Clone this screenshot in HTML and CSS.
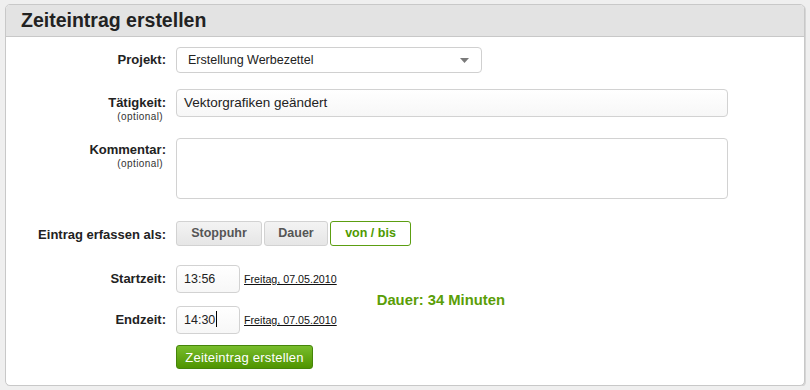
FILE: index.html
```html
<!DOCTYPE html>
<html lang="de">
<head>
<meta charset="utf-8">
<title>Zeiteintrag erstellen</title>
<link rel="stylesheet" href="styles.css">
</head>
<body>
<div class="page">
  <div class="panel">
    <div class="panel-head"><h1 class="title">Zeiteintrag erstellen</h1></div>
    <div class="form">
      <div class="row row-project">
        <div class="label lbl-project">Projekt:</div>
        <div class="select">
          <span>Erstellung Werbezettel</span>
          <svg class="arrow" width="9" height="5" viewBox="0 0 9 5"><path d="M0 0H9L4.5 5Z" fill="#7a7a7a"/></svg>
        </div>
      </div>
      <div class="row row-task">
        <div class="label lbl-task">Tätigkeit:<span class="opt">(optional)</span></div>
        <div class="input wide">Vektorgrafiken geändert</div>
      </div>
      <div class="row row-comment">
        <div class="label lbl-comment">Kommentar:<span class="opt">(optional)</span></div>
        <div class="textarea"></div>
      </div>
      <div class="row row-mode">
        <div class="label lbl-mode">Eintrag erfassen als:</div>
        <div class="seg">
          <span class="seg-btn b-stop">Stoppuhr</span>
          <span class="seg-btn b-dauer">Dauer</span>
          <span class="seg-btn b-active">von / bis</span>
        </div>
      </div>
      <div class="times">
        <div class="time-rows">
          <div class="row row-start">
            <div class="label lbl-time">Startzeit:</div>
            <div class="input time">13:56</div>
            <a class="date" href="#">Freitag, 07.05.2010</a>
          </div>
          <div class="row row-end">
            <div class="label lbl-time">Endzeit:</div>
            <div class="input time">14:30<span class="caret"></span></div>
            <a class="date" href="#">Freitag, 07.05.2010</a>
          </div>
        </div>
        <div class="duration">Dauer: 34 Minuten</div>
      </div>
      <div class="row row-submit">
        <div class="label"></div>
        <button class="submit" type="button">Zeiteintrag erstellen</button>
      </div>
    </div>
  </div>
</div>
</body>
</html>
```

FILE: styles.css
```css
html, body {
  margin: 0;
  padding: 0;
  background: #efefef;
  font-family: "Liberation Sans", Arial, sans-serif;
  color: #222;
}
.page {
  padding: 4px 5px 0 5px;
}
.panel {
  box-sizing: border-box;
  width: 800px;
  height: 382px;
  background: #fff;
  border: 1px solid #c8c8c8;
  border-radius: 5px;
  box-shadow: 1px 1px 0 #d6d6d6;
}
.panel-head {
  height: 31px;
  background: #e3e3e3;
  border-bottom: 1px solid #c8c8c8;
  border-radius: 4px 4px 0 0;
  padding-left: 15px;
}
.title {
  margin: 0;
  font-size: 19.5px;
  line-height: 31px;
  font-weight: bold;
  color: #222;
}
.form {
  padding-top: 10px;
}
.row {
  display: flex;
  align-items: flex-start;
}
.label {
  width: 160px;
  flex: none;
  margin-right: 10px;
  text-align: right;
  font-size: 13px;
  font-weight: bold;
  line-height: 16px;
  color: #222;
}
.opt {
  display: block;
  font-size: 10px;
  font-weight: normal;
  line-height: 12px;
  padding-right: 3px;
  letter-spacing: 0.4px;
  color: #333;
}
.select {
  box-sizing: border-box;
  width: 306px;
  height: 26px;
  border: 1px solid #d0d0d0;
  border-radius: 4px;
  background: #fff;
  display: flex;
  align-items: center;
  justify-content: space-between;
  padding: 0 12px 0 11px;
  font-size: 12.5px;
  color: #222;
}
.arrow { display: block; }
.lbl-project { padding-top: 5px; }
.row-task { margin-top: 16px; }
.lbl-task { padding-top: 6px; }
.input {
  box-sizing: border-box;
  height: 28px;
  border: 1px solid #d2d2d2;
  border-radius: 4px;
  background: linear-gradient(#ffffff, #f7f7f7);
  font-size: 13.5px;
  line-height: 26px;
  padding-left: 7px;
  color: #222;
}
.wide { width: 552px; }
.row-comment { margin-top: 15px; }
.lbl-comment { padding-top: 4px; }
.textarea {
  box-sizing: border-box;
  width: 552px;
  height: 61px;
  border: 1px solid #d2d2d2;
  border-radius: 4px;
  background: #fff;
}
.row-mode { margin-top: 22px; }
.lbl-mode { padding-top: 6px; }
.seg {
  display: flex;
  gap: 2px;
}
.seg-btn {
  box-sizing: border-box;
  height: 25px;
  line-height: 23px;
  border: 1px solid #d2d2d2;
  border-radius: 3px;
  background: linear-gradient(#f3f3f3, #e6e6e6);
  font-size: 12.5px;
  font-weight: bold;
  color: #555;
  text-align: center;
}
.b-stop { width: 86px; }
.b-dauer { width: 64px; }
.b-active {
  width: 81px;
  background: #fff;
  border-color: #5c9e12;
  color: #4f9a00;
}
.times {
  display: flex;
  align-items: center;
  margin-top: 19px;
}
.row-end { margin-top: 13px; }
.lbl-time { padding-top: 6px; }
.time {
  width: 64px;
  font-size: 12.5px;
  padding-left: 7px;
}
.caret {
  display: inline-block;
  width: 1px;
  height: 16px;
  background: #000;
  vertical-align: -3px;
  margin-left: 1px;
}
.date {
  margin-left: 4px;
  margin-top: 8px;
  font-size: 10.7px;
  line-height: 13px;
  color: #111;
  text-decoration: underline;
}
.duration {
  margin-left: 40px;
  font-size: 14.8px;
  font-weight: bold;
  color: #5a9e07;
}
.row-submit { margin-top: 11px; }
.submit {
  box-sizing: border-box;
  width: 137px;
  height: 24px;
  padding: 0;
  border: 1px solid #45850a;
  border-radius: 3px;
  background: linear-gradient(#78bd2c, #4f9400);
  color: #fff;
  font-family: "Liberation Sans", Arial, sans-serif;
  font-size: 13px;
  letter-spacing: 0.2px;
  cursor: pointer;
}
```
